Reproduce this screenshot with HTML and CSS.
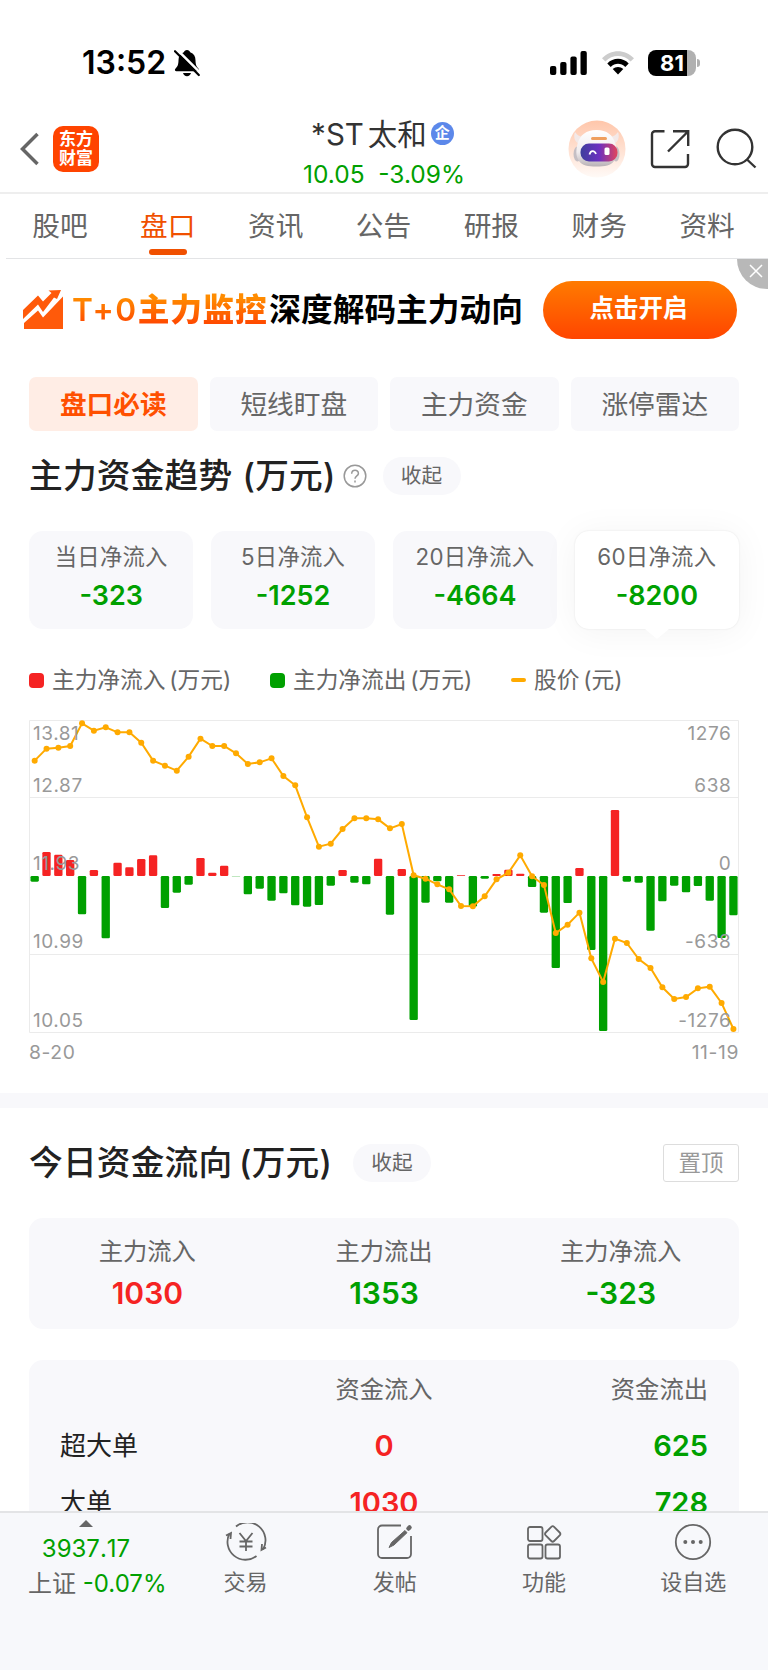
FILE: index.html
```html
<!DOCTYPE html>
<html lang="zh-CN">
<head>
  <meta charset="UTF-8">
  <title>*ST太和 - 盘口</title>
  <meta name="viewport" content="width=device-width, initial-scale=1">
  <link rel="stylesheet" href="styles.css">
</head>
<body>
  <div class="status-bar">
    <span class="clock">13:52</span>
    <svg class="bell" width="26" height="28" viewBox="0 0 26 28">
      <path d="M13 1c1.700 0 2.800 1 3.200 2.300 3.600 1.300 5.300 4.200 5.300 8 0 5.400 1.600 6.800 3.300 8.700 .8 1-.1 2.300-1.200 2.300H2.400c-1.200 0-2-1.300-1.200-2.300 1.700-1.900 3.300-3.300 3.300-8.700 0-3.800 1.700-6.700 5.300-8C10.200 2 11.300 1 13 1zM9 24h8c-.5 2-2 3.200-4 3.200S9.500 26 9 24z" fill="#000"/>
      <path d="M2.500 0 27 24.500" stroke="#fff" stroke-width="2.500"/>
      <path d="M1 2.200 24.800 26" stroke="#000" stroke-width="2.200" stroke-linecap="round"/>
    </svg>
    <svg class="signal" width="38" height="24" viewBox="0 0 38 24">
      <rect x="0" y="15" width="6.300" height="9" rx="2"/>
      <rect x="10.200" y="11" width="6.300" height="13" rx="2"/>
      <rect x="20.400" y="5.500" width="6.300" height="18.500" rx="2"/>
      <rect x="30.500" y="0" width="6.300" height="24" rx="2"/>
    </svg>
    <svg class="wifi" width="32" height="24" viewBox="0 0 32 24">
      <path d="M0 7.200C9-2.200 23-2.200 32 7.200L28.600 10.500C21.500 3.300 10.500 3.300 3.400 10.500z" fill="#ccc"/>
      <path d="M5.300 12.500C11.300 6.300 20.700 6.300 26.700 12.500L23.300 15.900C19 11.700 13 11.700 8.700 15.900z"/>
      <path d="M10.700 18C13.700 15.300 18.300 15.300 21.300 18L16 23.500z"/>
    </svg>
    <div class="battery"><span>81</span></div>
  </div>

  <header class="header">
    <svg class="back" width="20" height="34" viewBox="0 0 20 34"><path d="M17.500 2 2.500 17l15 15" fill="none" stroke="#666" stroke-width="3.500"/></svg>
    <div class="logo">东方<br>财富</div>
    <div class="stock">
      <div class="stock-name">*ST<span>太和</span><i>企</i></div>
      <div class="stock-price">10.05&nbsp; -3.09%</div>
    </div>
    <svg class="robot" width="58" height="58" viewBox="0 0 58 58">
      <defs>
        <linearGradient id="halo" x1="0" y1="0" x2="0" y2="1"><stop offset="0" stop-color="#ffc6aa"/><stop offset="1" stop-color="#fffaf7"/></linearGradient>
        <linearGradient id="visor" x1="0" y1="0" x2="1" y2="0"><stop offset="0" stop-color="#3d3f9c"/><stop offset=".5" stop-color="#6b2fc0"/><stop offset="1" stop-color="#e2455c"/></linearGradient>
        <linearGradient id="shell" x1="0" y1="0" x2="0" y2="1"><stop offset="0" stop-color="#fff"/><stop offset=".6" stop-color="#f0ecee"/><stop offset="1" stop-color="#b9b2b6"/></linearGradient>
      </defs>
      <circle cx="29" cy="29" r="28.500" fill="url(#halo)"/>
      <path d="M7 12c-2 5 0 10 4 12l6-7c-5 0-8-2-10-5zM50 12c2 5 0 10-4 12l-6-7c5 0 8-2 10-5z" fill="#f3e9e8"/>
      <ellipse cx="9.500" cy="34" rx="4" ry="7.500" fill="#c5bfc4"/><ellipse cx="48" cy="34" rx="3.500" ry="7.500" fill="#c5bfc4"/>
      <path d="M28.500 10C39 10 45 15 47.500 24c1.500 6 2 12-1.500 17-3 4.500-9 5.500-17.500 5.500S14 45.500 11 41c-3.500-5-3-11-1.500-17C12 15 18 10 28.500 10z" fill="url(#shell)"/>
      <rect x="23" y="17" width="16" height="3" rx="1.500" fill="#ef9f5e"/>
      <rect x="12.500" y="23.500" width="37" height="18" rx="8.500" fill="url(#visor)"/>
      <path d="M21.500 34.500c1-4.500 5-4.500 6.500-.5" fill="none" stroke="#fff" stroke-width="1.800"/>
      <rect x="36.500" y="27.500" width="5" height="7.500" rx="1.500" fill="#fff"/>
    </svg>
    <svg class="share" width="40" height="40" viewBox="0 0 40 40" fill="none" stroke="#333" stroke-width="2.400">
      <path d="M14.500 2.200H5a3 3 0 0 0-3 3V35a3 3 0 0 0 3 3h30a3 3 0 0 0 3-3V25"/>
      <path d="M23 2.200h15.200V17M38 2.500 18 22.500"/>
    </svg>
    <svg class="search" width="42" height="42" viewBox="0 0 42 42" fill="none" stroke="#333" stroke-width="2.400">
      <circle cx="19" cy="19" r="17.300"/><path d="M31 31.500 39.500 39.500"/>
    </svg>
  </header>

  <nav class="tabs">
    <a>股吧</a><a class="active">盘口</a><a>资讯</a><a>公告</a><a>研报</a><a>财务</a><a>资料</a>
  </nav>

  <main class="content">
    <div class="banner">
      <svg width="42" height="40" viewBox="0 0 42 40" fill="#ff5a0a">
        <path d="M0 20 15 5.500l5 6L28.500 3l-3-2.500L38 0l-4 9-3-1.500L20 22l-5-7.500L0 29z"/>
        <path d="M1 33 15 20.500l5 7L40 6.500V39H1z"/>
      </svg>
      <div class="banner-text"><em>T+0</em><b>主力监控</b>深度解码主力动向</div>
      <button class="banner-btn">点击开启</button>
      <span class="banner-close"><svg width="14" height="14" viewBox="0 0 14 14"><path d="M1 1l12 12M13 1 1 13" stroke="#fff" stroke-width="1.500"/></svg></span>
    </div>

    <div class="pills">
      <span class="pill active">盘口必读</span>
      <span class="pill">短线盯盘</span>
      <span class="pill">主力资金</span>
      <span class="pill">涨停雷达</span>
    </div>

    <section class="trend">
      <div class="title-row">
        <h2>主力资金趋势 (万元)</h2>
        <svg class="help" width="24" height="24" viewBox="0 0 24 24" fill="none" stroke="#999" stroke-width="1.500">
          <circle cx="12" cy="12" r="10.800"/>
          <path d="M8.700 9.800C8.700 5 15.600 5.200 15.400 9.600 15.300 11.900 12 12 12 14.800M12 16.600v1.800"/>
        </svg>
        <span class="fold">收起</span>
      </div>

      <div class="cards">
        <div class="card"><span>当日净流入</span><b>-323</b></div>
        <div class="card"><span>5日净流入</span><b>-1252</b></div>
        <div class="card"><span>20日净流入</span><b>-4664</b></div>
        <div class="card active"><span>60日净流入</span><b>-8200</b></div>
      </div>

      <div class="legend">
        <span class="in">主力净流入 (万元)</span>
        <span class="out">主力净流出 (万元)</span>
        <span class="price">股价 (元)</span>
      </div>

      <svg id="chart" class="chart" viewBox="27 30 2130 942"></svg>
      <div class="dates"><span>8-20</span><span>11-19</span></div>
    </section>

    <section class="today">
      <div class="title-row">
        <h2>今日资金流向 (万元)</h2>
        <span class="fold">收起</span>
        <span class="pin">置顶</span>
      </div>

      <div class="summary">
        <div><span>主力流入</span><b class="red">1030</b></div>
        <div><span>主力流出</span><b class="green">1353</b></div>
        <div><span>主力净流入</span><b class="green">-323</b></div>
      </div>

      <div class="orders">
        <div class="order head"><span></span><span>资金流入</span><span>资金流出</span></div>
        <div class="order"><span>超大单</span><b class="red">0</b><b class="green">625</b></div>
        <div class="order"><span>大单</span><b class="red">1030</b><b class="green">728</b></div>
      </div>
    </section>
  </main>

  <footer class="bottom-bar">
    <div class="index">
      <div class="index-top"><i></i>3937.17</div>
      <div class="index-rate"><span>上证</span> -0.07%</div>
    </div>
    <a>
      <svg width="42" height="38" viewBox="0 0 42 38" fill="none" stroke="#666" stroke-width="1.800">
        <path d="M11 3.500A18 18 0 0 1 38 26.500M31.500 33A18 18 0 0 1 4.500 10.500M1 12.500l5-2.500-.5 6M41 24.500l-4.500 2.500.5-6"/>
        <path d="M14.500 10 21 18l6.500-8M14.500 18.500h13M14.500 23.500h13M21 18v10"/>
      </svg>
      交易
    </a>
    <a>
      <svg width="38" height="38" viewBox="0 0 38 38" fill="none" stroke="#666" stroke-width="1.800">
        <path d="M25 2.500H6a4 4 0 0 0-4 4V31a4 4 0 0 0 4 4h25a4 4 0 0 0 4-4V13"/>
        <path d="M13 24.500l2.500-5L29 7.500l2 2.200L18 22z" fill="#666" stroke-width="1"/>
        <path d="M32.500 5.500 33.500 4.500" stroke-width="4.500" stroke-linecap="round"/>
      </svg>
      发帖
    </a>
    <a>
      <svg width="36" height="38" viewBox="0 0 36 38" fill="none" stroke="#666" stroke-width="1.800">
        <rect x="2" y="4" width="14.500" height="14" rx="2"/>
        <rect x="2" y="21.500" width="14.500" height="14" rx="2"/>
        <rect x="19.500" y="21.500" width="14.500" height="14" rx="2"/>
        <path d="M25.300 3.800a2 2 0 0 1 2.800 0l5.600 5.700a2 2 0 0 1 0 2.800l-5.600 5.700a2 2 0 0 1-2.800 0l-5.600-5.700a2 2 0 0 1 0-2.800z"/>
      </svg>
      功能
    </a>
    <a>
      <svg width="38" height="38" viewBox="0 0 38 38" fill="none" stroke="#666" stroke-width="1.800">
        <circle cx="19" cy="19" r="17.200"/>
        <g fill="#666" stroke="none"><circle cx="11.300" cy="19" r="2"/><circle cx="19" cy="19" r="2"/><circle cx="26.700" cy="19" r="2"/></g>
      </svg>
      设自选
    </a>
  </footer>

  <script src="script.js"></script>
</body>
</html>
```

FILE: styles.css
```css
* {
  box-sizing: border-box;
}

body {
  margin: 0;
  width: 768px;
  height: 1670px;
  display: flex;
  flex-direction: column;
  overflow: hidden;
  background: #fff;
  color: #666;
  font-family: Inter, "Noto Sans CJK SC", sans-serif;
}

svg {
  display: block;
  flex: none;
}

i, em {
  font-style: normal;
}

.red {
  color: #f52323;
}

.green {
  color: #00a000;
}

/* status bar */
.status-bar {
  height: 103px;
  flex: none;
  display: flex;
  align-items: center;
  padding: 22px 72px 0 82px;
}

.clock {
  width: 92px;
  font-size: 32px;
  font-weight: 600;
  color: #000;
}

.signal {
  margin-left: auto;
}

.wifi {
  margin: 0 14px;
}

.battery {
  position: relative;
  width: 48px;
  height: 26px;
  border-radius: 8px;
  background: linear-gradient(to right, #000 39px, #b0b0b0 39px);
  color: #fff;
  font-size: 22px;
  font-weight: 700;
  line-height: 27px;
  text-align: center;
}

.battery::after {
  content: "";
  position: absolute;
  right: -4px;
  top: 9px;
  width: 3px;
  height: 8px;
  border-radius: 0 3px 3px 0;
  background: #b0b0b0;
}

/* header */
.header {
  height: 91px;
  flex: none;
  display: flex;
  align-items: center;
  padding: 3px 10px 0 20px;
  border-bottom: 2px solid #eee;
}

.logo {
  width: 46px;
  height: 46px;
  margin-left: 13px;
  padding-top: 4px;
  border-radius: 10px;
  background: #ff4400;
  color: #fff;
  font-size: 17px;
  font-weight: 700;
  line-height: 19px;
  text-align: center;
}

.stock {
  width: 300px;
  margin-left: 135px;
  padding-top: 5px;
  text-align: center;
}

.stock-name {
  height: 42px;
  display: flex;
  align-items: baseline;
  justify-content: center;
  padding-right: 3px;
  color: #333;
  font-size: 29.500px;
  line-height: 42px;
}

.stock-name span {
  margin-left: 4px;
}

.stock-name i {
  align-self: center;
  width: 23px;
  height: 23px;
  margin-left: 4px;
  border-radius: 50%;
  background: #5c88ea;
  color: #fff;
  font-size: 15px;
  font-weight: 700;
  line-height: 22px;
}

.stock-price {
  height: 36px;
  line-height: 38px;
  font-size: 24.500px;
  color: #00a000;
}

.robot {
  margin-left: 34px;
}

.share {
  margin-left: 24px;
}

.search {
  margin-left: auto;
}

/* tabs */
.tabs {
  height: 65px;
  flex: none;
  display: flex;
  margin-left: 6px;
  padding-right: 7px;
  border-bottom: 1px solid #e3e4e6;
}

.tabs a {
  position: relative;
  flex: 1;
  font-size: 27.700px;
  line-height: 64px;
  text-align: center;
}

.tabs .active {
  color: #f05000;
}

.tabs .active::after {
  content: "";
  position: absolute;
  left: 50%;
  bottom: 3px;
  width: 38px;
  height: 6px;
  margin-left: -19px;
  border-radius: 3px;
  background: #f05000;
}

.content {
  flex: 1;
  min-height: 0;
  overflow: hidden;
}

/* banner */
.banner {
  position: relative;
  height: 102px;
  display: flex;
  align-items: center;
  padding: 0 31px 0 23px;
}

.banner-text {
  width: 478px;
  padding: 0 0 7px 7px;
  color: #000;
  font-size: 31.700px;
  font-weight: 700;
  white-space: nowrap;
}

.banner-text em,
.banner-text b {
  background: linear-gradient(#ff8c00 20%, #ff4a00 85%);
  background-clip: text;
  -webkit-background-clip: text;
  color: transparent;
}

.banner-text em {
  font-weight: 600;
  letter-spacing: 1.500px;
}

.banner-text b {
  margin-right: 2px;
  letter-spacing: 0.700px;
}

.banner-btn {
  width: 194px;
  height: 58px;
  flex: none;
  padding: 0 9px 7px 6px;
  border: none;
  border-radius: 29px;
  background: linear-gradient(#ff7b00, #ff4500);
  color: #fff;
  font-family: inherit;
  font-size: 24.500px;
  font-weight: 700;
}

.banner-close {
  position: absolute;
  top: 0;
  right: 0;
  width: 31px;
  height: 30px;
  padding: 5px 0 0 12px;
  border-radius: 0 0 0 30px;
  background: #b8b8b8;
}

/* section pills */
.pills {
  display: flex;
  gap: 12px;
  padding: 16px 29px 0;
}

.pill {
  flex: 1;
  height: 54px;
  border-radius: 7px;
  background: #f8f8fb;
  font-size: 26.700px;
  line-height: 55px;
  text-align: center;
}

.pill.active {
  background: #ffede5;
  color: #ff5000;
  font-weight: 700;
}

.title-row {
  display: flex;
  align-items: center;
  height: 38px;
}

h2 {
  margin: 0;
  padding-bottom: 5px;
  color: #222;
  font-size: 33.700px;
  font-weight: 500;
  letter-spacing: 0.200px;
  white-space: nowrap;
}

.help {
  margin-left: 7px;
}

.fold {
  width: 78px;
  height: 38px;
  margin-left: 16px;
  border-radius: 19px;
  background: #f8f8fb;
  font-size: 20.700px;
  line-height: 37px;
  text-align: center;
}

.pin {
  width: 76px;
  height: 38px;
  margin-left: auto;
  border: 1px solid #ddd;
  border-radius: 3px;
  color: #999;
  font-size: 22.500px;
  line-height: 36px;
  text-align: center;
}

/* capital trend */
.trend {
  height: 662px;
  padding: 26px 29px 0;
}

.trend h2 {
  word-spacing: 1px;
}

.cards {
  display: flex;
  gap: 17.500px;
  margin-top: 36px;
}

.card {
  position: relative;
  flex: 1;
  height: 98px;
  padding-top: 10px;
  border-radius: 14px;
  background: #f8f8fb;
  text-align: center;
}

.card span {
  display: block;
  height: 32px;
  line-height: 31px;
  font-size: 22.300px;
  letter-spacing: 0.300px;
}

.card b {
  display: block;
  height: 46px;
  line-height: 46px;
  color: #00a000;
  font-size: 27px;
  font-weight: 600;
}

.card.active {
  background: #fff;
  box-shadow: 0 3px 36px rgba(0, 0, 0, 0.05), 0 0 2px rgba(0, 0, 0, 0.1);
}

.card.active::after {
  content: "";
  position: absolute;
  left: 50%;
  top: 98px;
  margin-left: -12px;
  border: 12px solid transparent;
  border-top: 10px solid #fff;
  border-bottom: none;
}

.legend {
  display: flex;
  height: 40px;
  margin-top: 31px;
  line-height: 40px;
  font-size: 22.700px;
  word-spacing: -2.500px;
}

.legend span {
  display: flex;
  flex: none;
  align-items: center;
  width: 241px;
  white-space: pre;
}

.legend span::before {
  content: "";
  width: 15px;
  height: 15px;
  margin-right: 8px;
  border-radius: 4px;
}

.legend .in::before {
  background: #f52323;
}

.legend .out::before {
  background: #00a000;
}

.legend .price::before {
  height: 4px;
  border-radius: 2px;
  background: #ffaa00;
}

.chart {
  width: 710px;
  height: 314px;
  margin-top: 20px;
}

.chart .grid {
  fill: none;
  stroke: #ebebeb;
  stroke-width: 3;
}

.chart .line {
  fill: none;
  stroke: #ffaa00;
  stroke-width: 6;
}

.chart text {
  fill: #999;
  font-size: 57px;
  letter-spacing: 1.700px;
}

.chart .right {
  text-anchor: end;
}

.dates {
  display: flex;
  justify-content: space-between;
  height: 38px;
  line-height: 37px;
  color: #999;
  font-size: 19.300px;
  letter-spacing: 0.600px;
}

/* today's flow */
.today {
  padding: 36px 29px 0;
  border-top: 15px solid #f8f8fb;
}

.today h2 {
  word-spacing: -2.500px;
}

.today .fold {
  margin-left: 21px;
}

.summary {
  display: flex;
  height: 111px;
  margin-top: 36px;
  padding-top: 14px;
  border-radius: 14px;
  background: #f8f8fb;
  text-align: center;
}

.summary div {
  flex: 1;
}

.summary span {
  display: block;
  height: 38px;
  line-height: 38px;
  font-size: 24.300px;
}

.summary b {
  display: block;
  height: 48px;
  line-height: 46px;
  font-size: 30px;
  font-weight: 600;
}

.orders {
  height: 300px;
  margin-top: 31px;
  padding: 1px 31px;
  border-radius: 14px;
  background: #f8f8fb;
}

.order {
  display: grid;
  grid-template-columns: 1fr 1fr 1fr;
  height: 57px;
  line-height: 56px;
  color: #222;
  font-size: 26px;
}

.order.head {
  color: #666;
  font-size: 24.300px;
}

.order > :nth-child(2) {
  text-align: center;
}

.order > :nth-child(3) {
  text-align: right;
}

.order b {
  font-size: 29px;
  font-weight: 600;
}

/* bottom bar */
.bottom-bar {
  height: 159px;
  flex: none;
  display: flex;
  border-top: 2px solid #e3e4e6;
  background: #f7f8fb;
}

.index {
  width: 171px;
  padding: 7px 0 0 28px;
  color: #00a000;
  font-size: 24px;
  white-space: nowrap;
}

.index-top {
  width: 116px;
  height: 46px;
  line-height: 44px;
  font-kerning: none;
  text-align: center;
}

.index-top i {
  display: block;
  width: 0;
  margin: 0 auto;
  border: 7px solid transparent;
  border-bottom-color: #666;
  border-top: none;
}

.index-rate {
  height: 36px;
  line-height: 35px;
}

.index-rate span {
  color: #666;
}

.bottom-bar a {
  flex: 1;
  display: flex;
  flex-direction: column;
  align-items: center;
  padding-top: 10px;
  font-size: 22px;
  line-height: 42px;
}
```

FILE: script.js
```js
// vertical positions in viewBox units, one per trading day
const prices = [
  152, 116, 113, 108, 40, 62, 52, 67, 67, 98, 152, 167, 182, 140, 86, 108, 108, 130, 162, 157,
  145, 198, 226, 322, 410, 401, 357, 325, 325, 328, 355, 342, 496, 506, 523, 538, 588, 589, 559, 508,
  488, 436, 499, 525, 669, 644, 608, 745, 816, 686, 699, 747, 774, 832, 867, 861, 835, 830, 879, 957
];
const flows = [
  515, 426, 434, 450, 613, 480, 685, 458, 472, 447, 436, 594, 548, 524, 444, 488, 467, 499, 553, 536,
  572, 550, 586, 590, 585, 527, 480, 518, 523, 446, 614, 477, 930, 578, 514, 578, 496, 590, 506, 492,
  479, 491, 531, 608, 774, 579, 474, 720, 963, 300, 515, 518, 662, 574, 527, 547, 528, 572, 684, 616
];
const zero = 498;
const x = i => 44 + i * 35.53;

let svg = '<path class="grid" d="M28.5 31.500H2155.500V967.500H28.500zM28 262.500H2156M28 733.500H2156"/>';

flows.forEach((y, i) => {
  const color = y < zero ? "#f52323" : "#00a000";
  const top = Math.min(y, zero);
  const h = Math.abs(y - zero);
  svg += `<rect x="${x(i) - 12.5}" y="${top}" width="25" height="${h}" rx="${Math.min(4, h / 2)}" fill="${color}"/>`;
});

svg += `<polyline class="line" points="${prices.map((y, i) => x(i) + "," + y).join(" ")}"/>`;
prices.forEach((y, i) => {
  svg += `<circle cx="${x(i)}" cy="${y}" r="9" fill="#ffaa00"/>`;
});

const labels = [
  [90, "13.81", "1276"],
  [245, "12.87", "638"],
  [480, "11.93", "0"],
  [715, "10.99", "-638"],
  [950, "10.05", "-1276"]
];
labels.forEach(([y, left, right]) => {
  svg += `<text x="39" y="${y}">${left}</text><text class="right" x="2134" y="${y}">${right}</text>`;
});

document.getElementById("chart").innerHTML = svg;
```
